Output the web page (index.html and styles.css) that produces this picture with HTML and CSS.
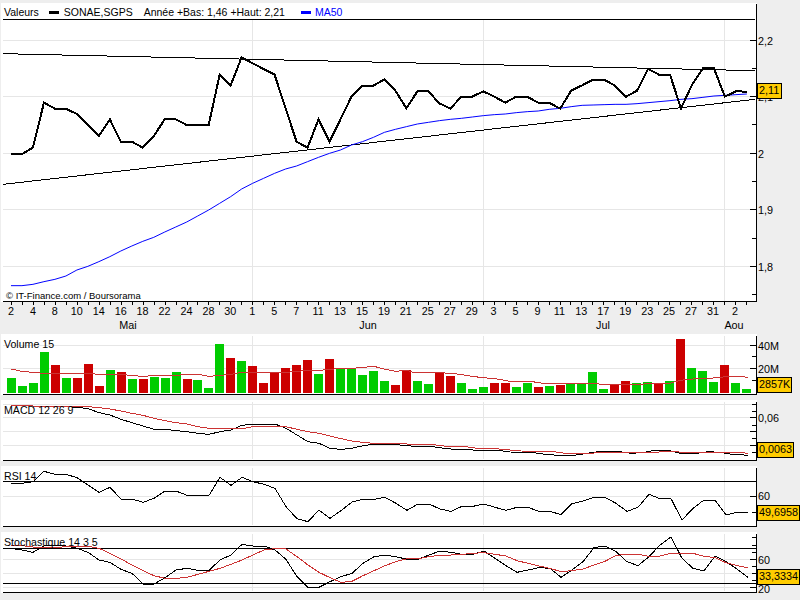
FILE: index.html
```html
<!DOCTYPE html>
<html lang="fr">
<head>
<meta charset="utf-8">
<title>SONAE,SGPS</title>
<link rel="stylesheet" href="styles.css">
</head>
<body>
<main class="chart">

  <section class="panel panel-main">
    <div class="plot">
      <svg viewBox="3 9 2268 897" width="756" height="299">
        <path class="grid" d="M9 122H2265M9 290H2265M9 460H2265M9 628H2265M9 799H2265M758 60V902M1450 60V902M2173 60V902"/>
        <path class="ink" d="M9 58H2265"/>
        <path class="ink" d="M9 161L2265 212"/>
        <path class="ink" d="M9 553L2265 298"/>
        <g transform="scale(.9985 1)">
          <polyline class="ma" points="33,857 66,857 99,853 132,845 165,838 198,828 231,810 264,799 297,785 330,770 363,753 396,738 429,724 462,712 495,696 528,681 561,666 594,648 627,630 660,610 693,590 726,567 759,550 792,535 825,520 858,507 891,498 924,485 957,472 990,460 1023,450 1056,435 1089,425 1122,412 1155,397 1188,388 1221,380 1254,372 1287,367 1320,362 1353,358 1386,355 1419,351 1452,347 1485,344 1518,342 1551,338 1584,335 1617,333 1650,328 1683,325 1716,320 1749,316 1782,315 1815,314 1848,313 1881,313 1914,311 1947,308 1980,305 2013,302 2046,298 2079,296 2112,292 2145,288 2178,286 2211,284 2244,282"/>
          <polyline class="price" points="33,462 66,462 99,443 132,308 165,326 198,326 231,342 264,375 297,408 330,358 363,425 396,425 429,443 462,408 495,358 528,358 561,375 594,375 627,375 660,224 693,256 726,172 759,190 792,207 825,224 858,325 891,425 924,443 957,358 990,425 1023,358 1056,290 1089,257 1122,257 1155,238 1188,272 1221,325 1254,274 1287,274 1320,310 1353,326 1386,290 1419,290 1452,274 1485,290 1518,308 1551,290 1584,290 1617,308 1650,308 1683,326 1716,272 1749,256 1782,239 1815,239 1848,257 1881,290 1914,272 1947,207 1980,224 2013,224 2046,325 2079,255 2112,205 2145,205 2178,290 2211,274 2244,275"/>
        </g>
        <path class="ink" d="M9 905H2268M2269 12V906"/>
        <path class="ink" d="M2250 122H2268M2250 290H2268M2250 460H2268M2250 628H2268M2250 799H2268M2256 205H2268M2256 373H2268M2256 544H2268M2256 715H2268M2256 883H2268"/>
      </svg>
      <div class="legend">
        <span class="legend-name">Valeurs</span>
        <i class="swatch swatch-black"></i>
        <span class="legend-stock">SONAE,SGPS</span>
        <span class="legend-range">Année +Bas: 1,46 +Haut: 2,21</span>
        <i class="swatch swatch-blue"></i>
        <span class="legend-ma">MA50</span>
      </div>
      <div class="credit">© IT-Finance.com / Boursorama</div>
    </div>
    <div class="axis">
      <span class="tick" style="top:38px">2,2</span>
      <span class="tick" style="top:94px">2,1</span>
      <span class="tick" style="top:151px">2</span>
      <span class="tick" style="top:207px">1,9</span>
      <span class="tick" style="top:264px">1,8</span>
      <b class="badge" style="top:80px">2,11</b>
    </div>
  </section>

  <section class="xaxis">
    <div class="xticks"></div>
    <div class="xlabels">
      <span>2</span><span>4</span><span>8</span><span>10</span><span>14</span><span>16</span><span>18</span><span>22</span><span>24</span><span>28</span><span>30</span><span>1</span><span>5</span><span>7</span><span>11</span><span>13</span><span>15</span><span>19</span><span>21</span><span>25</span><span>27</span><span>29</span><span>3</span><span>5</span><span>9</span><span>11</span><span>13</span><span>17</span><span>19</span><span>23</span><span>25</span><span>27</span><span>31</span><span>2</span>
    </div>
    <div class="months">
      <span class="month-may">Mai</span>
      <span class="month-jun">Jun</span>
      <span class="month-jul">Jul</span>
      <span class="month-aug">Aou</span>
    </div>
  </section>

  <div class="indicators">
    <section class="panel">
      <div class="plot">
        <svg viewBox="3 402 2268 183" width="756" height="61">
          <path class="grid" d="M9 436H2265M9 505H2265M758 408V579M1450 408V579M2173 408V579"/>
          <path class="up" d="M21 534h27V579h-27zM54 558h27V579h-27zM87 549h27V579h-27zM120 456h27V579h-27zM186 534h27V579h-27zM318 510h27V579h-27zM384 537h27V579h-27zM450 531h27V579h-27zM483 534h27V579h-27zM516 516h27V579h-27zM579 540h27V579h-27zM612 564h27V579h-27zM645 432h27V579h-27zM711 483h27V579h-27zM942 522h27V579h-27zM1008 504h27V579h-27zM1041 504h27V579h-27zM1074 525h27V579h-27zM1107 513h27V579h-27zM1140 543h27V579h-27zM1239 543h27V579h-27zM1272 552h27V579h-27zM1371 549h27V579h-27zM1404 567h27V579h-27zM1437 561h27V579h-27zM1536 561h27V579h-27zM1569 549h27V579h-27zM1635 558h27V579h-27zM1698 549h27V579h-27zM1731 549h27V579h-27zM1764 516h27V579h-27zM1797 567h27V579h-27zM1896 549h27V579h-27zM1929 546h27V579h-27zM1995 543h27V579h-27zM2061 504h27V579h-27zM2094 513h27V579h-27zM2127 546h27V579h-27zM2193 549h27V579h-27zM2226 567h27V579h-27z"/>
          <path class="down" d="M153 495h27V579h-27zM219 534h27V579h-27zM252 492h27V579h-27zM285 558h27V579h-27zM351 516h27V579h-27zM417 537h27V579h-27zM549 537h27V579h-27zM678 474h27V579h-27zM744 498h27V579h-27zM777 549h27V579h-27zM810 516h27V579h-27zM843 504h27V579h-27zM876 495h27V579h-27zM909 480h27V579h-27zM975 477h27V579h-27zM1173 555h27V579h-27zM1206 510h27V579h-27zM1305 516h27V579h-27zM1338 528h27V579h-27zM1470 549h27V579h-27zM1503 549h27V579h-27zM1602 561h27V579h-27zM1668 555h27V579h-27zM1830 555h27V579h-27zM1863 543h27V579h-27zM1962 549h27V579h-27zM2028 417h27V579h-27zM2160 495h27V579h-27z"/>
          <polyline class="avg" points="33,507 66,514 99,517 132,520 165,520 198,520 231,520 264,520 297,523 330,523 363,524 396,526 429,530 462,526 495,526 528,526 561,523 594,523 627,529 660,526 693,523 726,517 759,517 792,517 825,517 858,517 891,514 924,511 957,511 990,508 1023,505 1056,505 1089,502 1122,499 1155,508 1188,514 1220,511 1240,517 1305,517 1350,520 1380,523 1410,528 1440,532 1470,535 1500,538 1530,544 1590,544 1630,550 1700,550 1790,550 1800,553 1860,553 1920,553 1960,550 2010,550 2040,541 2070,538 2100,535 2130,535 2160,532 2190,529 2220,529 2244,532"/>
          <path class="ink" d="M9 583H2268M2269 408V584"/>
          <path class="ink" d="M2250 436H2268M2250 505H2268M2256 468H2268M2256 541H2268"/>
        </svg>
        <div class="plot-title">Volume 15</div>
      </div>
      <div class="axis">
        <span class="tick" style="top:12px">40M</span>
        <span class="tick" style="top:35px">20M</span>
        <b class="badge" style="top:43px">2857K</b>
      </div>
    </section>

    <section class="panel">
      <div class="plot">
        <svg viewBox="3 0 2268 183" width="756" height="61">
          <path class="grid" d="M9 13H2265M9 52H2265M9 95H2265M9 136H2265M758 6V177M1450 6V177M2173 6V177"/>
          <polyline class="line" points="33,16 66,16 99,18 132,18 165,18 198,20 231,22 264,26 297,38 330,45 363,58 396,68 429,78 462,88 495,88 528,92 561,95 594,100 627,103 660,95 693,90 726,76 759,72 792,72 825,72 858,85 891,105 924,125 957,130 990,145 1023,148 1056,145 1089,137 1122,133 1155,133 1188,133 1200,135 1233,138 1299,140 1332,145 1365,148 1398,148 1431,151 1497,151 1530,156 1596,157 1629,162 1662,165 1728,165 1761,160 1794,155 1860,155 1893,160 1926,158 1959,152 2010,152 2040,160 2090,160 2124,155 2160,157 2190,162 2244,166"/>
          <polyline class="avg" points="33,16 66,16 99,18 132,18 165,19 198,19 231,19 264,20 297,23 330,27 363,33 396,40 429,46 462,55 495,62 528,68 561,72 594,80 627,85 660,85 693,85 726,86 759,80 792,79 825,79 858,80 891,88 924,95 957,100 990,108 1023,116 1056,123 1089,127 1122,130 1155,130 1188,130 1200,130 1233,133 1299,134 1332,138 1398,140 1431,145 1497,147 1563,153 1662,155 1695,160 1761,160 1827,157 1960,157 1992,155 2025,155 2058,158 2220,157 2244,160"/>
          <path class="ink" d="M9 181H2268M2269 6V182"/>
          <path class="ink" d="M2250 53H2268M2250 95H2268M2250 136H2268M2256 13H2268M2256 33H2268M2256 75H2268M2256 116H2268M2256 158H2268"/>
        </svg>
        <div class="plot-title">MACD 12 26 9</div>
      </div>
      <div class="axis">
        <span class="tick" style="top:18px">0,06</span>
        <b class="badge" style="top:42px">0,0063</b>
      </div>
    </section>

    <section class="panel">
      <div class="plot">
        <svg viewBox="3 198 2268 183" width="756" height="61">
          <path class="grid" d="M9 290H2265M758 204V375M1450 204V375M2173 204V375"/>
          <path class="ink" d="M9 244H2268"/>
          <polyline class="line" points="33,250 66,250 99,245 132,214 165,223 198,223 231,233 264,255 297,277 330,262 363,297 396,297 429,307 462,295 495,273 528,273 561,286 594,286 627,286 660,232 693,256 726,232 759,245 792,253 825,265 858,320 891,356 924,365 957,330 990,355 1023,332 1056,306 1089,298 1122,298 1155,292 1188,310 1221,331 1254,312 1287,312 1320,327 1353,334 1386,319 1419,319 1452,312 1485,322 1518,331 1551,322 1584,322 1617,334 1650,334 1683,344 1716,311 1749,303 1782,292 1815,292 1848,310 1881,334 1914,322 1947,283 1980,296 2013,296 2046,360 2079,325 2112,300 2145,300 2178,345 2211,337 2244,337"/>
          <path class="ink" d="M9 379H2268M2269 204V380"/>
          <path class="ink" d="M2250 290H2268M2256 338H2268"/>
        </svg>
        <div class="plot-title">RSI 14</div>
      </div>
      <div class="axis">
        <span class="tick" style="top:30px">60</span>
        <b class="badge" style="top:39px">49,6958</b>
      </div>
    </section>

    <section class="panel">
      <div class="plot">
        <svg viewBox="3 396 2268 183" width="756" height="61">
          <path class="grid" d="M9 478H2265M9 520H2265M9 562H2265M758 402V573M1450 402V573M2173 402V573"/>
          <path class="ink" d="M9 445H2268M9 550H2268"/>
          <polyline class="line" points="33,445 66,450 99,457 132,438 165,436 198,438 231,445 264,457 297,480 330,487 363,508 396,520 429,552 462,552 495,533 528,510 561,505 594,511 627,511 660,480 693,465 726,433 759,438 792,438 825,450 858,478 891,530 924,562 957,562 990,545 1023,530 1056,520 1089,490 1122,470 1155,466 1188,470 1221,478 1254,478 1287,465 1320,453 1353,457 1386,463 1419,463 1452,453 1485,475 1518,497 1551,517 1584,510 1617,503 1650,505 1683,532 1716,510 1749,485 1782,443 1815,438 1848,455 1881,485 1914,497 1947,470 1980,435 2013,411 2046,475 2079,505 2112,513 2145,468 2178,485 2211,507 2244,532"/>
          <polyline class="avg" points="33,435 66,437 99,441 132,443 165,443 198,440 231,439 264,439 297,445 330,460 363,477 396,495 429,512 462,527 495,535 528,535 561,532 594,523 627,514 660,505 693,493 726,480 759,465 792,450 825,446 858,447 891,470 924,495 957,517 990,533 1023,547 1056,544 1089,527 1122,512 1155,497 1188,485 1221,476 1254,476 1287,470 1320,466 1353,465 1386,463 1419,460 1452,458 1485,463 1518,468 1551,482 1584,490 1617,498 1650,505 1683,515 1716,512 1749,507 1782,495 1815,484 1848,466 1881,463 1914,463 1947,469 1980,468 2013,460 2046,460 2079,460 2112,469 2145,473 2178,488 2211,497 2244,503"/>
          <path class="ink" d="M9 577H2268M2269 402V578"/>
          <path class="ink" d="M2250 478H2268M2250 562H2268M2256 412H2268M2256 437H2268M2256 457H2268M2256 499H2268M2256 520H2268M2256 541H2268"/>
        </svg>
        <div class="plot-title">Stochastique 14 3 5</div>
      </div>
      <div class="axis">
        <span class="tick" style="top:28px">60</span>
        <span class="tick" style="top:57px">20</span>
        <b class="badge" style="top:37px">33,3334</b>
      </div>
    </section>
  </div>
</main>
</body>
</html>
```

FILE: styles.css
```css
* { box-sizing: border-box; }

html, body {
  margin: 0;
  height: 600px;
  overflow: hidden;
  background: #eeeeee;
  color: #000;
  font: 10.8px/13px "Liberation Sans", Arial, sans-serif;
}

.chart {
  display: flex;
  flex-direction: column;
  padding-top: 3px;
}

.panel {
  display: flex;
  height: 61px;
  padding-left: 1px;
}

.panel-main { height: 299px; }

.plot {
  position: relative;
  flex: 0 0 756px;
}

.plot svg {
  display: block;
  background: #fff;
}

.grid { fill: none; stroke: #e6e6e6; stroke-width: 3; shape-rendering: crispEdges; }
.ink { fill: none; stroke: #000; stroke-width: 3; shape-rendering: crispEdges; }
.ma { fill: none; stroke: #0000ff; stroke-width: 3; shape-rendering: crispEdges; }
.price { fill: none; stroke: #000; stroke-width: 6; shape-rendering: crispEdges; }
.line { fill: none; stroke: #000; stroke-width: 3; shape-rendering: crispEdges; }
.avg { fill: none; stroke: #cc3333; stroke-width: 3; shape-rendering: crispEdges; }
.up { fill: #00cc00; shape-rendering: crispEdges; }
.down { fill: #cc0000; shape-rendering: crispEdges; }

.legend {
  position: absolute;
  top: 3px;
  left: 3px;
  display: flex;
  align-items: center;
  font-size: 10.5px;
  white-space: nowrap;
}

.swatch {
  display: block;
  width: 10px;
  height: 3px;
}

.swatch-black { background: #000; margin-left: 10px; margin-right: 5px; }
.swatch-blue { background: #0000ff; margin-left: 16px; margin-right: 4px; }
.legend-range { margin-left: 11px; }
.legend-ma { color: #0000ff; }

.credit {
  position: absolute;
  left: 5px;
  bottom: 0;
  font-size: 9.5px;
  white-space: nowrap;
}

.plot-title {
  position: absolute;
  top: 4px;
  left: 3px;
  font-size: 10.6px;
  white-space: nowrap;
}

.axis {
  position: relative;
  flex: 1;
}

.tick {
  position: absolute;
  left: 1px;
  transform: translateY(-50%);
}

.badge {
  position: absolute;
  left: 0;
  min-width: 25px;
  height: 16px;
  padding: 0 1px;
  border: 1px solid #000;
  background: #ffcc00;
  font-weight: normal;
  white-space: nowrap;
}

.xaxis {
  display: flex;
  flex-direction: column;
  height: 32px;
}

.xticks {
  width: 736px;
  height: 3px;
  margin-left: 10.97px;
  background: repeating-linear-gradient(90deg, #000 0 1px, transparent 1px 10.97px);
}

.xlabels {
  display: grid;
  grid-template-columns: repeat(34, 21.94px);
  text-align: center;
}

.months {
  display: flex;
  margin-top: 1px;
}

.months span { display: flex; justify-content: center; }
.month-may { width: 256px; }
.month-jun { width: 224px; }
.month-jul { width: 246px; }
.month-aug { width: 16px; }

.indicators {
  display: flex;
  flex-direction: column;
  gap: 5px;
}
```
